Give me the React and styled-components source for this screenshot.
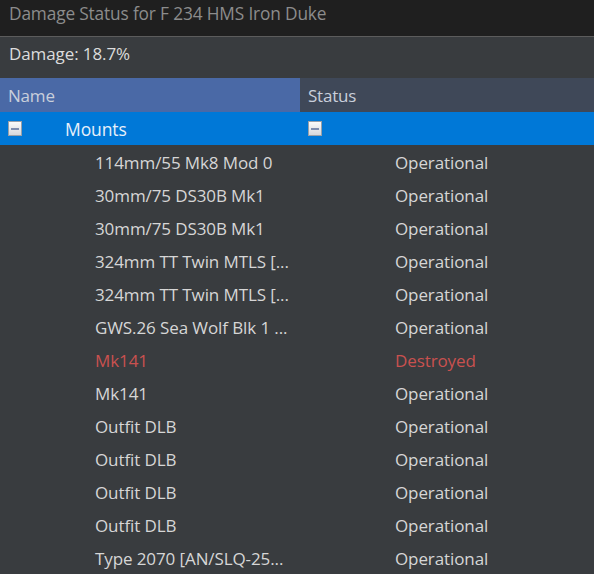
import React from "react";
import styled, { createGlobalStyle } from "styled-components";

const GlobalStyle = createGlobalStyle`
  html, body {
    margin: 0;
    padding: 0;
    background: #393c3f;
  }
  body {
    font-family: "Open Sans", "Noto Sans", sans-serif;
  }
`;

const mounts = [
  { name: "114mm/55 Mk8 Mod 0", status: "Operational" },
  { name: "30mm/75 DS30B Mk1", status: "Operational" },
  { name: "30mm/75 DS30B Mk1", status: "Operational" },
  { name: "324mm TT Twin MTLS [...", status: "Operational" },
  { name: "324mm TT Twin MTLS [...", status: "Operational" },
  { name: "GWS.26 Sea Wolf Blk 1 ...", status: "Operational" },
  { name: "Mk141", status: "Destroyed" },
  { name: "Mk141", status: "Operational" },
  { name: "Outfit DLB", status: "Operational" },
  { name: "Outfit DLB", status: "Operational" },
  { name: "Outfit DLB", status: "Operational" },
  { name: "Outfit DLB", status: "Operational" },
  { name: "Type 2070 [AN/SLQ-25...", status: "Operational" },
];

function CollapseBox() {
  return (
    <Box>
      <span />
    </Box>
  );
}

function App() {
  return (
    <Window>
      <GlobalStyle />
      <TitleBar>Damage Status for F 234 HMS Iron Duke</TitleBar>
      <Summary>Damage: 18.7%</Summary>
      <Grid>
        <HeaderRow>
          <HeaderCell $active>Name</HeaderCell>
          <HeaderCell>Status</HeaderCell>
        </HeaderRow>
        <GroupRow>
          <GroupCell>
            <CollapseBox />
            <GroupName>Mounts</GroupName>
          </GroupCell>
          <GroupCell>
            <CollapseBox />
          </GroupCell>
        </GroupRow>
        {mounts.map((m, i) => {
          const destroyed = m.status === "Destroyed";
          return (
            <Row key={i} $destroyed={destroyed}>
              <NameCell>{m.name}</NameCell>
              <StatusCell>{m.status}</StatusCell>
            </Row>
          );
        })}
      </Grid>
    </Window>
  );
}

const Window = styled.div`
  width: 594px;
  height: 574px;
  overflow: hidden;
  background: #393c3f;
  display: flex;
  flex-direction: column;
`;

const TitleBar = styled.div`
  flex: none;
  height: 37px;
  box-sizing: border-box;
  padding: 0 9px 10px;
  display: flex;
  align-items: center;
  background: #1f1f1f;
  border-bottom: 1px solid #5c5c5c;
  color: #8c8c8c;
  font-size: 17.3px;
  letter-spacing: -0.15px;
`;

const Summary = styled.div`
  flex: none;
  height: 41px;
  box-sizing: border-box;
  padding: 0 9px 8px;
  display: flex;
  align-items: center;
  color: #dcdcdc;
  font-size: 17px;
  letter-spacing: -0.1px;
  background: #393c3f;
`;

const Grid = styled.div`
  display: flex;
  flex-direction: column;
`;

const HeaderRow = styled.div`
  display: grid;
  grid-template-columns: 300px 1fr;
  height: 34px;
`;

const HeaderCell = styled.div`
  display: flex;
  align-items: center;
  padding-left: 8px;
  background: ${(p) => (p.$active ? "#4a69a6" : "#3f4858")};
  color: #c9cfdb;
  font-size: 17px;
  letter-spacing: -0.2px;
`;

const GroupRow = styled.div`
  display: grid;
  grid-template-columns: 300px 1fr;
  height: 33px;
  background: #0078d7;
`;

const GroupCell = styled.div`
  display: flex;
  align-items: center;
  padding-left: 8px;
`;

const GroupName = styled.span`
  margin-left: 43px;
  color: #e8f0fa;
  font-size: 17.5px;
  letter-spacing: -0.1px;
`;

const Box = styled.span`
  width: 14px;
  height: 15px;
  box-sizing: border-box;
  border: 1px solid #9aa0a8;
  background: linear-gradient(#fbfbfb, #d6d8dc);
  display: flex;
  align-items: center;
  justify-content: center;
  span {
    width: 8px;
    height: 2px;
    background: #7d8cae;
  }
`;

const Row = styled.div`
  display: grid;
  grid-template-columns: 300px 1fr;
  height: 33px;
  align-items: center;
  color: ${(p) => (p.$destroyed ? "#c9514f" : "#d6d6d6")};
  font-size: 17px;
  letter-spacing: -0.1px;
  padding-top: 2px;
  box-sizing: border-box;
`;

const NameCell = styled.div`
  padding-left: 95px;
  white-space: nowrap;
`;

const StatusCell = styled.div`
  padding-left: 95px;
  white-space: nowrap;
`;

export default App;
